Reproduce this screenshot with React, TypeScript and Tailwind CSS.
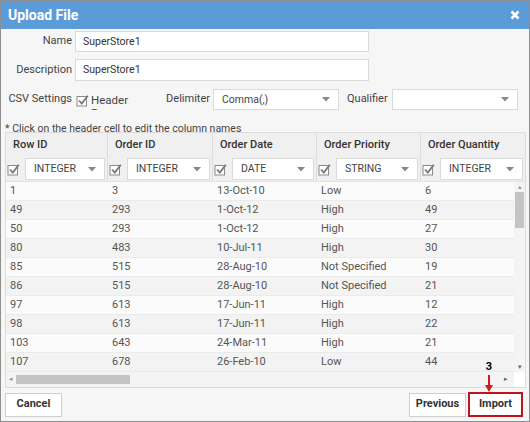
import React from "react";

const columns = [
  { name: "Row ID", type: "INTEGER", width: "w-[102px]" },
  { name: "Order ID", type: "INTEGER", width: "w-[105px]" },
  { name: "Order Date", type: "DATE", width: "w-[104px]" },
  { name: "Order Priority", type: "STRING", width: "w-[104px]" },
  { name: "Order Quantity", type: "INTEGER", width: "w-[104px]" },
];

const rows = [
  ["1", "3", "13-Oct-10", "Low", "6"],
  ["49", "293", "1-Oct-12", "High", "49"],
  ["50", "293", "1-Oct-12", "High", "27"],
  ["80", "483", "10-Jul-11", "High", "30"],
  ["85", "515", "28-Aug-10", "Not Specified", "19"],
  ["86", "515", "28-Aug-10", "Not Specified", "21"],
  ["97", "613", "17-Jun-11", "High", "12"],
  ["98", "613", "17-Jun-11", "High", "22"],
  ["103", "643", "24-Mar-11", "High", "21"],
  ["107", "678", "26-Feb-10", "Low", "44"],
];

function Check() {
  return (
    <svg width="13" height="13" viewBox="0 0 13 13" className="shrink-0">
      <rect x="1" y="2.5" width="9.5" height="9.5" fill="#fff" stroke="#8a8a8a" strokeWidth="1" />
      <path d="M3 6.5 L5.8 9.5 L11.8 1.8" fill="none" stroke="#777" strokeWidth="1.8" />
    </svg>
  );
}

function Caret() {
  return (
    <svg width="8" height="5" viewBox="0 0 8 5" className="shrink-0">
      <path d="M0 0 L8 0 L4 4.5 Z" fill="#888" />
    </svg>
  );
}

function Select({ value, className }: { value: string; className: string }) {
  return (
    <div className={`flex items-center justify-between bg-white border border-[#dadada] pl-[8px] pr-[8px] text-[10.5px] text-[#444] ${className}`}>
      <span>{value}</span>
      <Caret />
    </div>
  );
}

export default function App() {
  return (
    <div className="w-[530px] h-[422px] font-['Roboto','Liberation_Sans',sans-serif]">
      <div className="h-full flex flex-col border border-[#8f8f8f] bg-[#f6f6f6] relative">
        {/* title */}
        <div className="h-[28px] shrink-0 bg-[#5b9bd8] flex items-center justify-between pl-[7px] pr-[9px]">
          <span className="text-white font-bold text-[14px]">Upload File</span>
          <svg width="10" height="10" viewBox="0 0 10 10">
            <path d="M1.5 1.5 L8.5 8.5 M8.5 1.5 L1.5 8.5" stroke="#fff" strokeWidth="2.6" />
          </svg>
        </div>

        {/* form */}
        <div className="flex items-center mt-[2px] h-[21px] text-[11px] text-[#444]">
          <div className="w-[71px] text-right">Name</div>
          <div className="ml-[3px] w-[294px] h-full bg-white border border-[#dadada] flex items-center pl-[7px] text-[10.5px] text-[#333]">SuperStore1</div>
        </div>
        <div className="flex items-center mt-[7px] h-[22px] text-[11px] text-[#444]">
          <div className="w-[71px] text-right">Description</div>
          <div className="ml-[3px] w-[294px] h-full bg-white border border-[#dadada] flex items-center pl-[7px] text-[10.5px] text-[#333]">SuperStore1</div>
        </div>
        <div className="flex items-center mt-[8px] h-[21px] text-[11px] text-[#444]">
          <div className="w-[71px] text-right">CSV Settings</div>
          <div className="ml-[4px] flex items-start h-[16px] mt-[4px] overflow-hidden">
            <Check />
            <div className="ml-[2px] w-[44px] leading-[13px] text-[11.5px]">Header Row</div>
          </div>
          <div className="w-[75px] text-right">Delimiter</div>
          <Select value="Comma(,)" className="ml-[3px] w-[126px] h-full" />
          <div className="ml-[8px] w-[44px]">Qualifier</div>
          <Select value="" className="ml-[1px] w-[126px] h-full" />
        </div>
        <div className="mt-[10px] h-[12px] leading-[17px] pl-[4px] text-[10.5px] text-[#444]">
          * Click on the header cell to edit the column names
        </div>

        {/* table */}
        <div className="ml-[4px] mr-[3px] border border-[#dcdcdc] bg-white flex flex-col relative z-10">
          <div className="flex bg-[#f0f0f0]">
            {columns.map((c, i) => (
              <div key={c.name} className={`${i === 4 ? "flex-1" : c.width} ${i < 4 ? "border-r border-[#dcdcdc]" : ""} flex flex-col`}>
                <div className="h-[24px] flex items-center pl-[7px] text-[11px] font-medium text-[#333]">{c.name}</div>
                <div className="h-[24px] flex items-center pl-[1px] pr-[2px]">
                  <Check />
                  <Select value={c.type} className="ml-[5px] flex-1 h-[22px]" />
                </div>
              </div>
            ))}
          </div>
          <div className="flex border-t border-[#e2e2e2]">
            <div className="flex-1 overflow-hidden">
              {rows.map((r, ri) => (
                <div key={ri} className={`flex h-[19px] items-center border-b border-[#ebebeb] text-[11px] text-[#555] ${ri % 2 === 0 ? "bg-[#fbfbfb]" : "bg-[#f3f3f3]"}`}>
                  {r.map((v, ci) => (
                    <div key={ci} className={`${columns[ci].width} shrink-0 pl-[4px]`}>{v}</div>
                  ))}
                </div>
              ))}
            </div>
            <div className="w-[11px] bg-[#f4f4f4] flex flex-col items-center">
              <span className="text-[7px] leading-[10px] text-[#999]">▴</span>
              <div className="w-[9px] h-[36px] bg-[#c4c4c4]" />
              <div className="flex-1" />
              <span className="text-[7px] leading-[10px] text-[#666]">▾</span>
            </div>
          </div>
          <div className="h-[15px] flex items-center bg-[#f4f4f4]">
            <span className="ml-[3px] text-[7px] text-[#999]">◂</span>
            <div className="ml-[3px] w-[114px] h-[9px] bg-[#c4c4c4]" />
            <div className="flex-1" />
            <span className="text-[7px] text-[#666] mr-[6px]">▸</span>
            <div className="w-[11px] h-full bg-white" />
          </div>
        </div>

        {/* footer */}
        <div className="flex-1 flex items-center justify-between pl-[4px] pr-[6px]">
          <button className="w-[57px] h-[24px] bg-white border border-[#cfcfcf] text-[11px] font-bold text-[#333]">Cancel</button>
          <div className="flex items-center gap-[2px]">
            <button className="w-[57px] h-[24px] bg-white border border-[#cfcfcf] text-[11px] font-bold text-[#333]">Previous</button>
            <button className="w-[55px] h-[25px] bg-white border-2 border-[#c0141c] text-[11px] font-bold text-[#333]">Import</button>
          </div>
        </div>

        {/* annotation */}
        <div className="absolute left-[483px] top-[360px] z-20 flex flex-col items-center">
          <span className="text-[11px] font-bold text-black leading-[12px]">3</span>
          <svg width="10" height="18" viewBox="0 0 10 18" className="mt-[2px]">
            <path d="M5 0 L5 11" stroke="#d11a1a" strokeWidth="2" />
            <path d="M1 10 L9 10 L5 17 Z" fill="#d11a1a" />
          </svg>
        </div>
      </div>
    </div>
  );
}
